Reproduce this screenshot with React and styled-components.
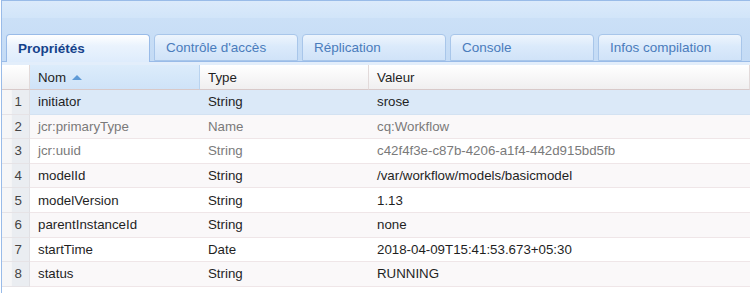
import React from 'react'
import styled, { createGlobalStyle } from 'styled-components'

const GlobalStyle = createGlobalStyle`
    html, body {
        margin: 0;
        padding: 0;
        background: #ffffff;
    }
    body {
        font-family: "Liberation Sans", Arial, sans-serif;
    }
`

const Panel = styled.div`
    width: 748px;
    height: 292px;
    margin-left: 1px;
    border-left: 1px solid #99bbe8;
    border-top: 1px solid #99bbe8;
    overflow: hidden;
    background: #ffffff;
`

const TopBar = styled.div`
    height: 17px;
    background: linear-gradient(#dbeafb, #d2e5f9);
`

const TabStrip = styled.div`
    display: flex;
    align-items: flex-end;
    gap: 4px;
    height: 43px;
    padding-left: 4px;
    box-sizing: border-box;
    background: linear-gradient(#cbe0f7, #c4dbf5);
`

const Tab = styled.div`
    width: 144px;
    height: ${props => (props.active ? '28px' : '27px')};
    box-sizing: border-box;
    padding-left: 11px;
    display: flex;
    align-items: center;
    border: 1px solid ${props => (props.active ? '#99bbe8' : '#a8c6ea')};
    border-bottom: ${props => (props.active ? 'none' : '1px solid #a8c6ea')};
    border-radius: 4px 4px 0 0;
    background: ${props =>
        props.active
            ? 'linear-gradient(#ffffff 0%, #eaf3fd 40%, #deecfc 100%)'
            : 'linear-gradient(#eef5fd 0%, #dbeafb 45%, #d0e3f8 100%)'};
    color: ${props => (props.active ? '#15428b' : '#4a7cbc')};
    font-size: 13.5px;
    font-weight: ${props => (props.active ? 'bold' : 'normal')};
    margin-bottom: ${props => (props.active ? '-1px' : '0')};
    position: relative;
    white-space: nowrap;
`

const TabFloor = styled.div`
    height: 3px;
    border-top: 1px solid #99bbe8;
    background: #e3eefb;
`

const Grid = styled.div`
    display: grid;
    grid-template-columns: 28px 170px 169px 1fr;
`

const HeadCell = styled.div`
    height: 25px;
    box-sizing: border-box;
    display: flex;
    align-items: center;
    padding-left: ${props => (props.num ? '0' : '8px')};
    gap: 6px;
    font-size: 13.3px;
    color: #1f1f1f;
    border-bottom: 1px solid #d8c9c9;
    border-right: 1px solid ${props => (props.sorted ? '#b9d3ef' : '#e2dada')};
    background: ${props =>
        props.sorted
            ? 'linear-gradient(#dcecfb, #cfe3f8)'
            : 'linear-gradient(#ffffff, #f0eff0)'};
`

const SortArrow = styled.span`
    width: 0;
    height: 0;
    border-left: 5px solid transparent;
    border-right: 5px solid transparent;
    border-bottom: 5px solid #5e9ad6;
    margin-top: 1px;
`

const NumCell = styled.div`
    height: 24.6px;
    box-sizing: border-box;
    display: flex;
    align-items: center;
    justify-content: flex-end;
    padding-right: 7px;
    font-size: 13.3px;
    color: #444;
    border-bottom: 1px solid #e6e3e6;
    border-right: 1px solid #e0e0e4;
    background: linear-gradient(to right, #f6f6f7 0%, #f6f6f7 35%, #eaedf1 36%, #eaedf1 100%);
`

const Cell = styled.div`
    height: 24.6px;
    box-sizing: border-box;
    display: flex;
    align-items: center;
    padding-left: 8px;
    font-size: 13.3px;
    white-space: nowrap;
    color: ${props => (props.muted ? '#7a7a7a' : '#1f1f1f')};
    border-bottom: 1px solid ${props => (props.selected ? '#d3e2f2' : '#efe6e8')};
    background: ${props =>
        props.selected ? '#dbe9f8' : props.alt ? '#faf8f9' : '#ffffff'};
`

const tabs = ['Propriétés', "Contrôle d'accès", 'Réplication', 'Console', 'Infos compilation']

const rows = [
    ['initiator', 'String', 'srose'],
    ['jcr:primaryType', 'Name', 'cq:Workflow', true],
    ['jcr:uuid', 'String', 'c42f4f3e-c87b-4206-a1f4-442d915bd5fb', true],
    ['modelId', 'String', '/var/workflow/models/basicmodel'],
    ['modelVersion', 'String', '1.13'],
    ['parentInstanceId', 'String', 'none'],
    ['startTime', 'Date', '2018-04-09T15:41:53.673+05:30'],
    ['status', 'String', 'RUNNING'],
]

export default function App() {
    return (
        <>
            <GlobalStyle />
            <Panel>
                <TopBar />
                <TabStrip>
                    {tabs.map((t, i) => (
                        <Tab key={t} active={i === 0}>{t}</Tab>
                    ))}
                </TabStrip>
                <TabFloor />
                <Grid>
                    <HeadCell num />
                    <HeadCell sorted>Nom <SortArrow /></HeadCell>
                    <HeadCell>Type</HeadCell>
                    <HeadCell>Valeur</HeadCell>
                    {rows.map(([name, type, value, muted], i) => {
                        const selected = i === 0
                        const alt = i % 2 === 1
                        return (
                            <React.Fragment key={name}>
                                <NumCell>{i + 1}</NumCell>
                                <Cell selected={selected} alt={alt} muted={muted}>{name}</Cell>
                                <Cell selected={selected} alt={alt} muted={muted}>{type}</Cell>
                                <Cell selected={selected} alt={alt} muted={muted}>{value}</Cell>
                            </React.Fragment>
                        )
                    })}
                </Grid>
            </Panel>
        </>
    )
}
